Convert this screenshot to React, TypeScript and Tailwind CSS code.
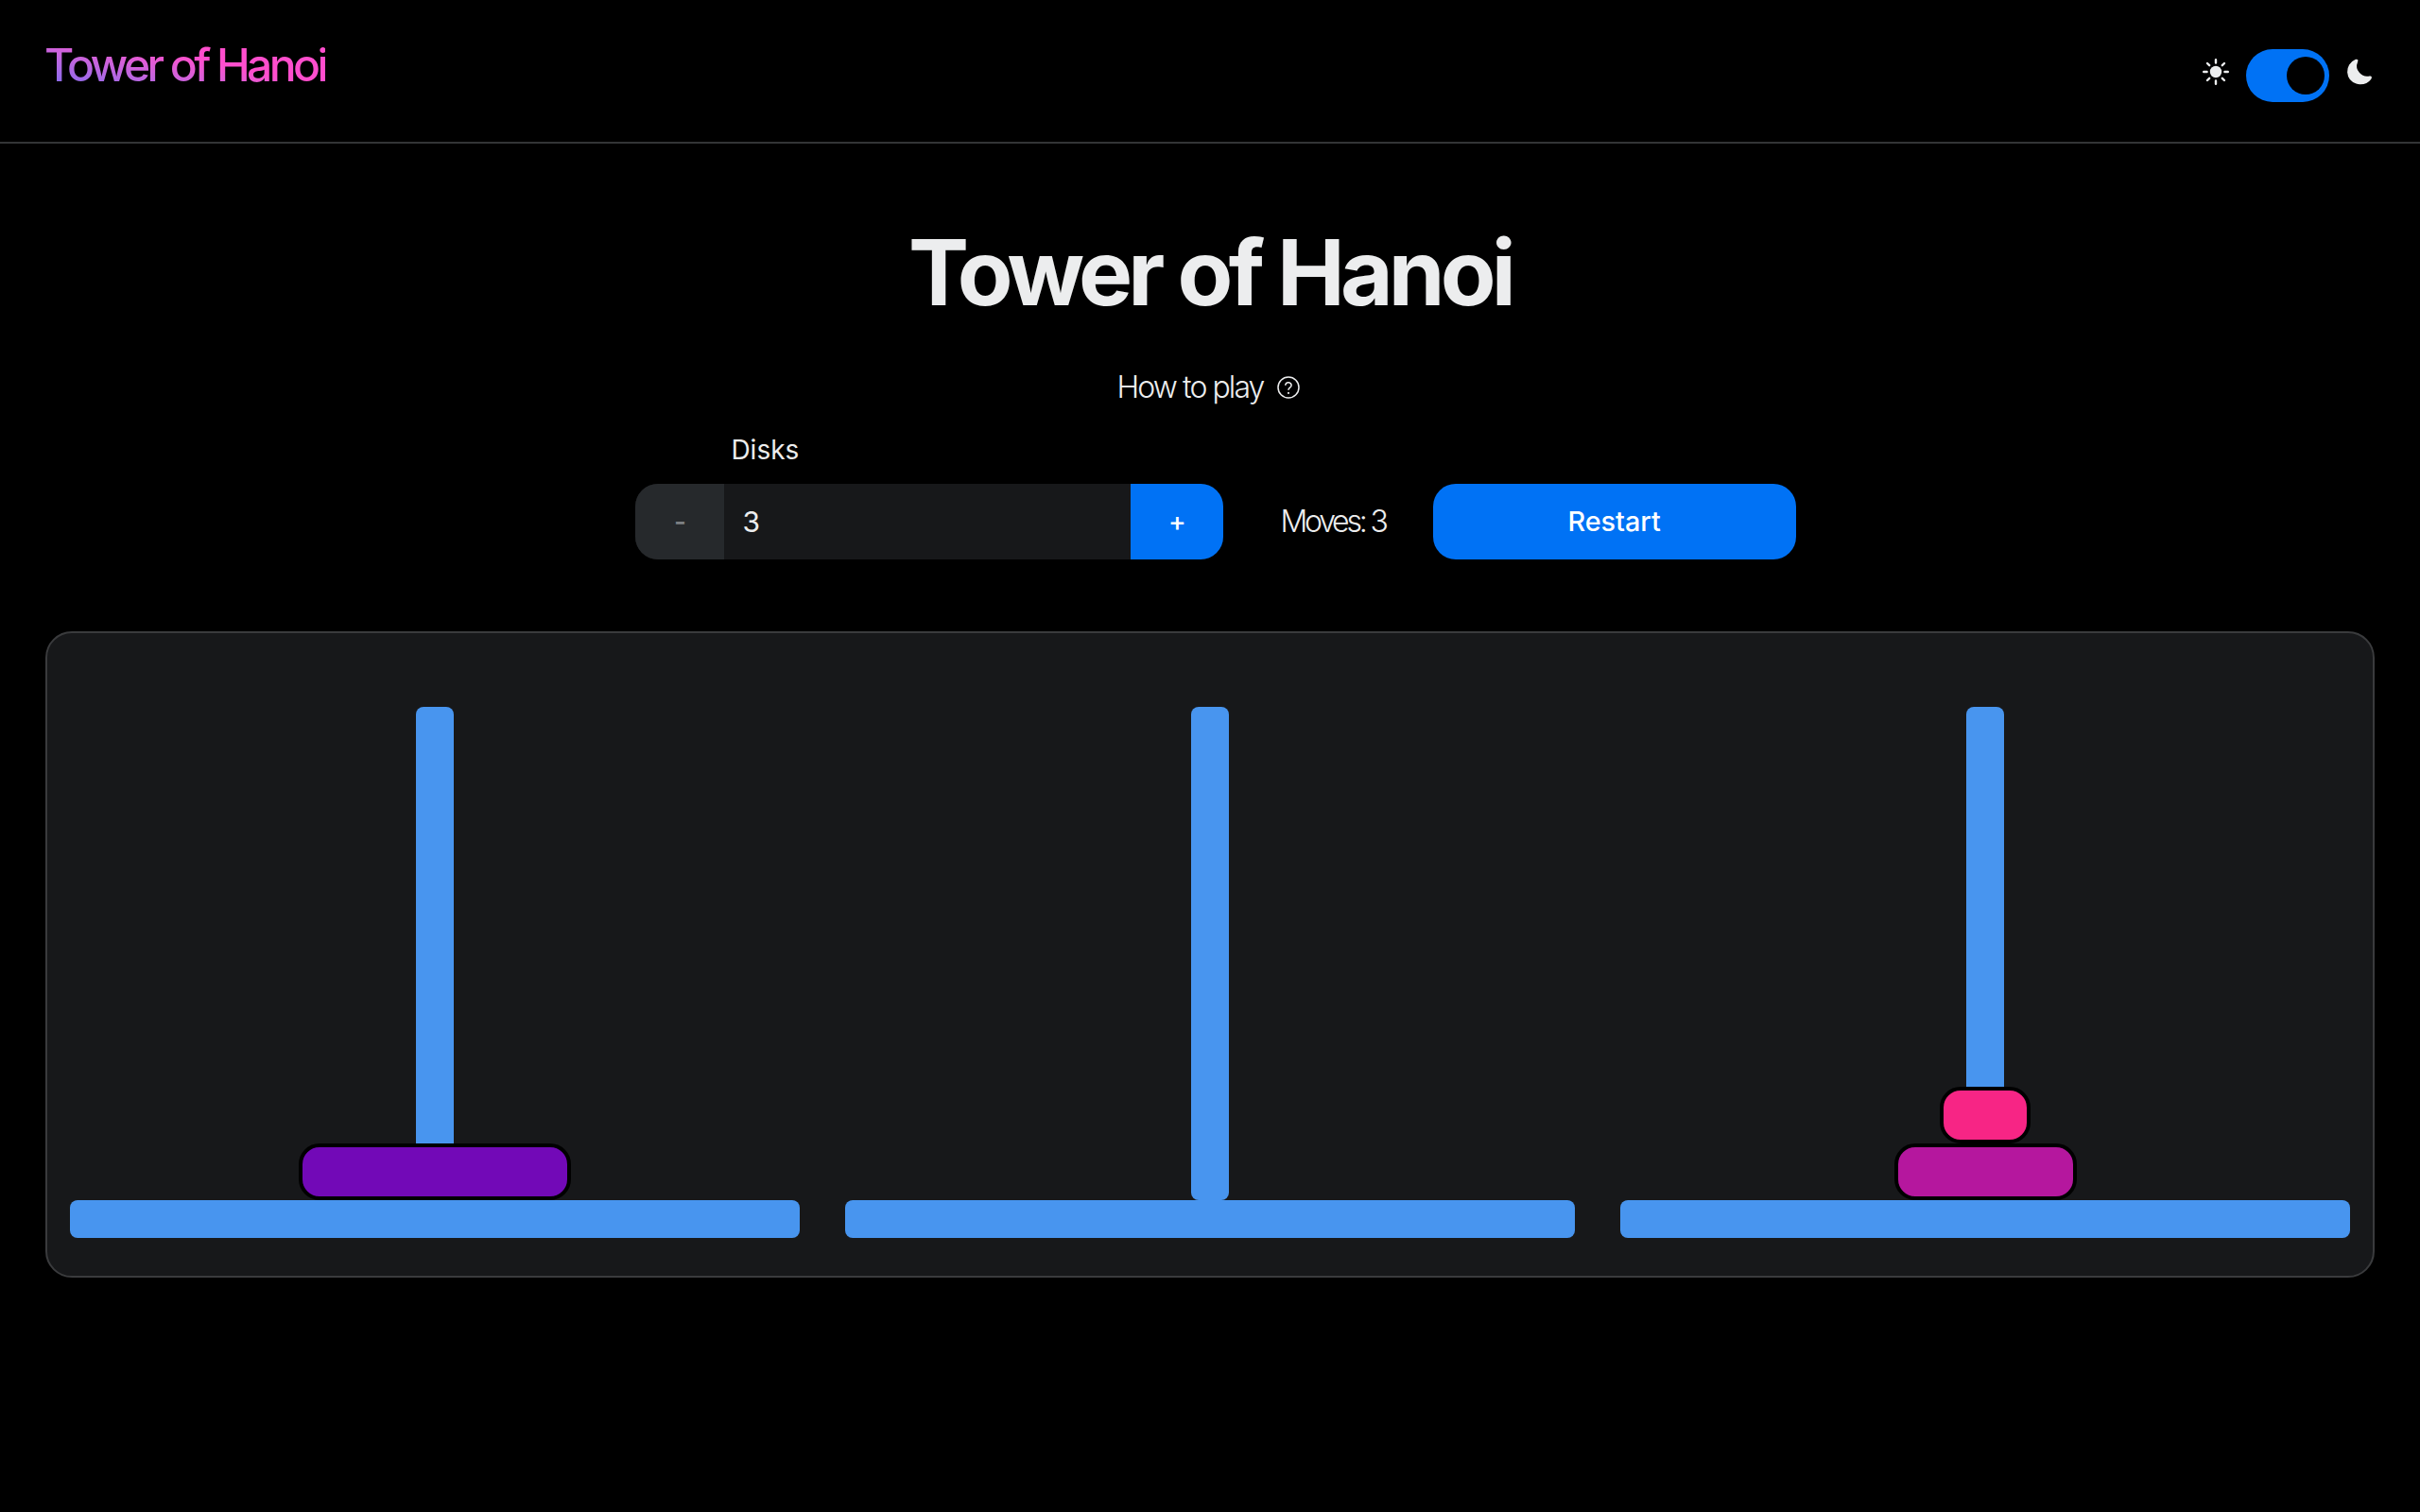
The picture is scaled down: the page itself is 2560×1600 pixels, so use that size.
const disks = {
  left: [{ width: "w-[288px]", color: "bg-[#7209b7]" }],
  middle: [],
  right: [
    { width: "w-[96px]", color: "bg-[#f72585]" },
    { width: "w-[193px]", color: "bg-[#b5179e]" },
  ],
};

function Tower({ items }: { items: { width: string; color: string }[] }) {
  return (
    <div className="relative flex h-[562px] flex-col items-center justify-end">
      <div className="absolute top-0 bottom-[40px] left-1/2 w-[40px] -translate-x-1/2 rounded-lg bg-[#4895ef]" />
      {items.map((d) => (
        <div
          key={d.color}
          className={`relative h-[60px] rounded-[22px] border-4 border-black ${d.width} ${d.color}`}
        />
      ))}
      <div className="relative h-[40px] w-full shrink-0 rounded-lg bg-[#4895ef]" />
    </div>
  );
}

function SunIcon() {
  return (
    <svg width="28" height="28" viewBox="0 0 28 28" fill="none" className="mb-2 text-[#ecedee]">
      <circle cx="14" cy="14" r="6.2" fill="currentColor" />
      <g stroke="currentColor" strokeWidth="2.4" strokeLinecap="round">
        <path d="M14 1.2v3.4M14 23.4v3.4M1.2 14h3.4M23.4 14h3.4M5 5l2.2 2.2M20.8 20.8 23 23M5 23l2.2-2.2M20.8 7.2 23 5" />
      </g>
    </svg>
  );
}

function MoonIcon() {
  return (
    <svg width="32" height="32" viewBox="0 0 24 24" fill="currentColor" className="mb-2 text-[#ecedee]">
      <path d="M21.53 15.93c-.16-.27-.61-.69-1.73-.49a8.46 8.46 0 01-1.88.13 8.409 8.409 0 01-5.91-2.82 8.068 8.068 0 01-1.44-8.66c.44-1.01.13-1.54-.09-1.76s-.77-.55-1.83-.11a10.318 10.318 0 00-6.32 10.21 10.475 10.475 0 007.04 8.99 10 10 0 002.89.55c.16.01.32.02.48.02a10.5 10.5 0 008.47-4.27c.67-.93.49-1.519.32-1.79z" />
    </svg>
  );
}

function HelpIcon() {
  return (
    <svg width="24" height="24" viewBox="0 0 24 24" fill="none" stroke="currentColor" strokeWidth="1.5" strokeLinecap="round">
      <circle cx="12" cy="12" r="11" />
      <path d="M8.8 9.2a3.2 3.2 0 0 1 6.3.7c0 2-3.1 2.3-3.1 4.4" />
      <path d="M12 17.8v.1" strokeWidth="2" />
    </svg>
  );
}

export default function App() {
  return (
    <div className="min-h-[1600px] bg-black font-['Inter',sans-serif] text-[#ecedee]">
      <header className="flex h-[152px] items-start justify-between border-b-2 border-[#333436] px-12">
        <div className="mt-[35px] -ml-[1px] bg-gradient-to-tr from-[#5f6af5] to-[#ff4ecd] to-[58%] bg-clip-text text-[48px] leading-[68px] font-[450] tracking-[-0.075em] text-transparent">
          Tower of Hanoi
        </div>
        <div className="mt-[52px] flex items-center">
          <SunIcon />
          <div className="mr-[16px] ml-[18px] flex h-[56px] w-[88px] items-center justify-end rounded-full bg-[#0072f5] pr-[5px]">
            <div className="h-[40px] w-[40px] rounded-full bg-black" />
          </div>
          <MoonIcon />
        </div>
      </header>

      <main className="px-12">
        <h1 className="mt-[88px] text-center text-[96px] leading-[96px] font-bold tracking-[-0.05em]">
          Tower of Hanoi
        </h1>
        <div className="mt-[50px] mr-[3px] flex items-center justify-center gap-[15px] text-[32px] leading-[48px] font-light tracking-[-0.06em]">
          <span>How to play</span>
          <HelpIcon />
        </div>

        <div className="mt-[24px] ml-[12px] flex items-end justify-center">
          <div>
            <div className="mb-[18px] pl-[101px] text-[28px] leading-[36px]">Disks</div>
            <div className="flex h-[80px] w-[622px] overflow-hidden rounded-[24px] bg-[#17181a] text-[28px]">
              <button className="w-[94px] bg-[#26292c] font-medium text-[#7d8084]">-</button>
              <div className="flex flex-1 items-center pl-[19px] text-[30px]">3</div>
              <button className="w-[98px] bg-[#0072f5] font-medium text-white">+</button>
            </div>
          </div>
          <div className="ml-[60px] flex h-[80px] items-center text-[32px] font-light tracking-[-0.1em]">
            Moves: 3
          </div>
          <button className="ml-[50px] h-[80px] w-[384px] rounded-[24px] bg-[#0072f5] text-[28.8px] font-medium text-white">
            Restart
          </button>
        </div>

        <div className="mt-[76px] grid grid-cols-3 gap-12 rounded-[28px] border-2 border-[#3a3b3d] bg-[#17181a] px-6 pt-[78px] pb-[40px]">
          <Tower items={disks.left} />
          <Tower items={disks.middle} />
          <Tower items={disks.right} />
        </div>
      </main>
    </div>
  );
}
